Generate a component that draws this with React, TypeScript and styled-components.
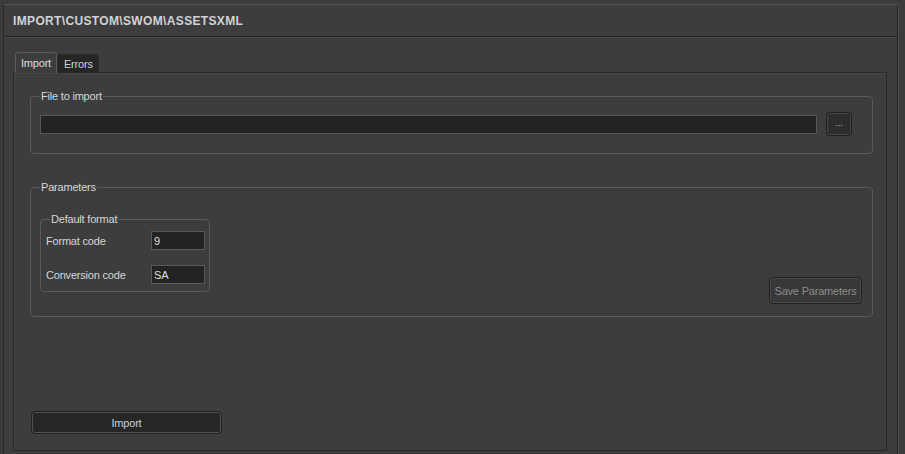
import React from 'react';
import styled, { createGlobalStyle } from 'styled-components';

const GlobalStyle = createGlobalStyle`
  html, body {
    margin: 0;
    padding: 0;
    background: #3c3c3c;
    overflow: hidden;
  }
  body {
    font-family: "Liberation Sans", Arial, sans-serif;
    font-size: 11px;
    color: #d6d6d6;
  }
`;

const Page = styled.div`
  padding: 4px 0 0 3px;
  height: 100vh;
  box-sizing: border-box;
`;

const Window = styled.div`
  width: 895px;
  height: 100%;
  box-sizing: border-box;
  background: #3d3d3d;
  border-top: 1px solid #565656;
  border-left: 1px solid #2a2a2a;
  border-right: 1px solid #232323;
  box-shadow: 1px 0 0 #4c4c4c;
  display: flex;
  flex-direction: column;
`;

const TitleBar = styled.div`
  height: 31px;
  flex: none;
  display: flex;
  align-items: center;
  padding-left: 9px;
  border-bottom: 1px solid #262626;
  box-shadow: 0 1px 0 #4a4a4a;
  font-size: 12px;
  font-weight: bold;
  letter-spacing: 0.35px;
  color: #d2d2d2;
`;

const Body = styled.div`
  padding: 15px 10px 0 9px;
`;

const TabRow = styled.div`
  display: flex;
  align-items: flex-end;
  height: 20px;
  padding-left: 2px;
`;

const Tab = styled.div<{ $active?: boolean }>`
  box-sizing: border-box;
  height: ${({ $active }) => ($active ? '21px' : '18px')};
  margin-bottom: ${({ $active }) => ($active ? '-1px' : '0')};
  padding: 0 5px 0 ${({ $active }) => ($active ? '5px' : '6px')};
  display: flex;
  align-items: center;
  position: relative;
  z-index: ${({ $active }) => ($active ? 1 : 0)};
  background: ${({ $active }) => ($active ? '#3d3d3d' : '#262626')};
  border: 1px solid ${({ $active }) => ($active ? '#5c5c5c' : '#2c2c2c')};
  border-bottom: none;
  border-radius: 3px 3px 0 0;
  color: ${({ $active }) => ($active ? '#dcdcdc' : '#d0d0d0')};
  letter-spacing: -0.2px;
`;

const Pane = styled.div`
  height: 379px;
  box-sizing: border-box;
  border: 1px solid #282828;
  box-shadow: inset 1px 1px 0 #464646;
  padding: 17px 13px 0 16px;
  display: flex;
  flex-direction: column;
`;

const Group = styled.fieldset<{ $width?: number }>`
  margin: 0;
  padding: 0;
  min-width: 0;
  width: ${({ $width }) => ($width ? `${$width}px` : 'auto')};
  box-sizing: border-box;
  border: 1px solid #5a5a5a;
  border-radius: 4px;
`;

const Legend = styled.legend`
  margin-left: 9px;
  padding: 0 1px;
  line-height: 13px;
  color: #d6d6d6;
  letter-spacing: -0.2px;
`;

const FileRow = styled.div`
  display: flex;
  align-items: center;
  gap: 9px;
  padding: 9px 20px 17px 9px;
`;

const TextBox = styled.div<{ $width?: number }>`
  box-sizing: border-box;
  height: 19px;
  width: ${({ $width }) => ($width ? `${$width}px` : 'auto')};
  flex: ${({ $width }) => ($width ? 'none' : '1')};
  background: #232323;
  border: 1px solid #595959;
  padding: 0 2px;
  display: flex;
  align-items: center;
  color: #dedede;
`;

const BrowseButton = styled.div`
  box-sizing: border-box;
  width: 26px;
  height: 24px;
  border: 1px solid #1f1f1f;
  border-radius: 4px;
  background: #2d2d2d;
  box-shadow: inset 0 0 0 1px #464646;
  display: flex;
  align-items: center;
  justify-content: center;
  color: #bdbdbd;
  font-size: 9px;
  padding-bottom: 3px;
`;

const ParamsGroup = styled(Group)`
  margin-top: 27px;
`;

const ParamsBody = styled.div`
  display: flex;
  justify-content: space-between;
  align-items: flex-end;
  padding: 19px 10px 12px 9px;
`;

const FormatGrid = styled.div`
  display: grid;
  grid-template-columns: 1fr 54px;
  align-items: center;
  row-gap: 15px;
  padding: 5px 4px 7px 5px;
`;

const Label = styled.span`
  letter-spacing: -0.2px;
  color: #d6d6d6;
`;

const InnerGroup = styled(Group)`
  margin-bottom: 12px;
`;

const ActionButton = styled.div<{ $disabled?: boolean; $width: number; $height: number }>`
  box-sizing: border-box;
  width: ${({ $width }) => $width}px;
  height: ${({ $height }) => $height}px;
  border: 1px solid #222;
  border-radius: 4px;
  background: ${({ $disabled }) => ($disabled ? '#383838' : '#262626')};
  box-shadow: inset 0 0 0 1px ${({ $disabled }) => ($disabled ? '#4a4a4a' : '#505050')};
  display: flex;
  align-items: center;
  justify-content: center;
  color: ${({ $disabled }) => ($disabled ? '#8c8c8c' : '#cfcfcf')};
  letter-spacing: -0.2px;
`;

const Footer = styled.div`
  margin-top: auto;
  padding: 0 0 16px 1px;
`;

export default function App() {
  return (
    <>
      <GlobalStyle />
      <Page>
        <Window>
          <TitleBar>IMPORT\CUSTOM\SWOM\ASSETSXML</TitleBar>
          <Body>
            <TabRow>
              <Tab $active>Import</Tab>
              <Tab>Errors</Tab>
            </TabRow>
            <Pane>
              <Group>
                <Legend>File to import</Legend>
                <FileRow>
                  <TextBox />
                  <BrowseButton>...</BrowseButton>
                </FileRow>
              </Group>

              <ParamsGroup>
                <Legend>Parameters</Legend>
                <ParamsBody>
                  <InnerGroup $width={170}>
                    <Legend>Default format</Legend>
                    <FormatGrid>
                      <Label>Format code</Label>
                      <TextBox $width={54}>9</TextBox>
                      <Label>Conversion code</Label>
                      <TextBox $width={54}>SA</TextBox>
                    </FormatGrid>
                  </InnerGroup>
                  <ActionButton $disabled $width={93} $height={27}>
                    Save Parameters
                  </ActionButton>
                </ParamsBody>
              </ParamsGroup>

              <Footer>
                <ActionButton $width={191} $height={23}>
                  Import
                </ActionButton>
              </Footer>
            </Pane>
          </Body>
        </Window>
      </Page>
    </>
  );
}
